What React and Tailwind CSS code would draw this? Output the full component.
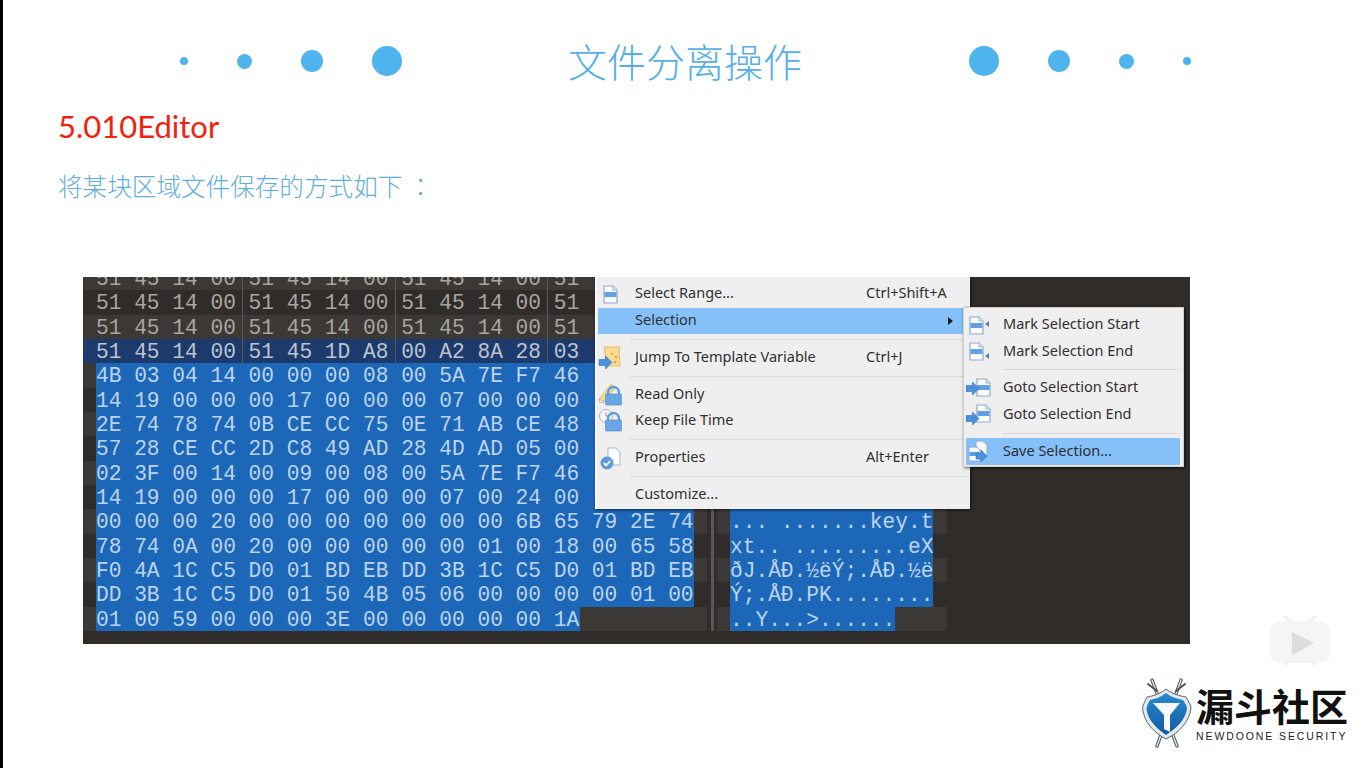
import React from "react";

const rows = [
  { hex: "51 45 14 00 51 45 14 00 51 45 14 00 51" },
  { hex: "51 45 14 00 51 45 14 00 51 45 14 00 51" },
  { hex: "51 45 14 00 51 45 14 00 51 45 14 00 51" },
  { hex: "51 45 14 00 51 45 1D A8 00 A2 8A 28 03", mark: true },
  { hex: "4B 03 04 14 00 00 00 08 00 5A 7E F7 46", sel: true },
  { hex: "14 19 00 00 00 17 00 00 00 07 00 00 00", sel: true },
  { hex: "2E 74 78 74 0B CE CC 75 0E 71 AB CE 48", sel: true },
  { hex: "57 28 CE CC 2D C8 49 AD 28 4D AD 05 00", sel: true },
  { hex: "02 3F 00 14 00 09 00 08 00 5A 7E F7 46", sel: true },
  { hex: "14 19 00 00 00 17 00 00 00 07 00 24 00", sel: true },
  { hex: "00 00 00 20 00 00 00 00 00 00 00 6B 65 79 2E 74", sel: true, asc: "... .......key.t" },
  { hex: "78 74 0A 00 20 00 00 00 00 00 01 00 18 00 65 58", sel: true, asc: "xt.. .........eX" },
  { hex: "F0 4A 1C C5 D0 01 BD EB DD 3B 1C C5 D0 01 BD EB", sel: true, asc: "ðJ.ÅÐ.½ëÝ;.ÅÐ.½ë" },
  { hex: "DD 3B 1C C5 D0 01 50 4B 05 06 00 00 00 00 01 00", sel: true, asc: "Ý;.ÅÐ.PK........" },
  { hex: "01 00 59 00 00 00 3E 00 00 00 00 00 1A", sel: true, short: true, asc: "..Y...>......" },
];

const Page = ({ x = 0, y = 0 }) => (
  <g transform={`translate(${x} ${y})`}>
    <path d="M1 1h9l4 4v13H1z" fill="#fbfcfe" stroke="#8fa9cf" strokeWidth="1.2" />
    <rect x="1.5" y="7" width="12" height="5" fill="#5fa0e6" />
    <path d="M10 1v4h4" fill="#dfe7f3" stroke="#8fa9cf" strokeWidth="0.8" />
  </g>
);

const Arrow = ({ x = 0, y = 0 }) => (
  <path
    transform={`translate(${x} ${y})`}
    d="M13 6.5 6.5 0v3.5H0v6h6.5V13z"
    fill="#4a90dc"
    stroke="#2f74c0"
    strokeWidth="0.6"
  />
);

const Lock = () => (
  <g>
    <path d="M10 13v-2.5a5.5 5.5 0 0 1 11 0V13" fill="none" stroke="#5f9fe0" strokeWidth="2.4" />
    <rect x="7.5" y="12" width="16" height="11" rx="1" fill="#6aa6e6" stroke="#4c87c8" strokeWidth="0.6" />
  </g>
);

const Icon = ({ kind }) => {
  const base = "w-[26px] h-[26px] shrink-0";
  if (kind === "page")
    return (
      <svg viewBox="0 0 26 26" className={base}>
        <Page x={5} y={4} />
      </svg>
    );
  if (kind === "scroll")
    return (
      <svg viewBox="0 0 26 26" className={base}>
        <path d="M6 2h16l-1 4 1 15H8L7 7z" fill="#f7dc95" stroke="#e8bd62" strokeWidth="1" />
        <circle cx="14" cy="9" r="1.3" fill="#dca94c" />
        <circle cx="18" cy="12" r="1.3" fill="#dca94c" />
        <circle cx="17" cy="17" r="1.3" fill="#dca94c" />
        <Arrow x={1} y={11} />
      </svg>
    );
  if (kind === "lockpen")
    return (
      <svg viewBox="0 0 26 26" className={base}>
        <path d="M1 17 13 2l5 3L6 20z" fill="#f6d98f" stroke="#e2bb66" strokeWidth="0.8" />
        <path d="M1 17l1 4 4-1z" fill="#fff" stroke="#999" strokeWidth="0.6" />
        <Lock />
      </svg>
    );
  if (kind === "lockclock")
    return (
      <svg viewBox="0 0 26 26" className={base}>
        <circle cx="8" cy="8" r="6.5" fill="#f6f6f8" stroke="#a9b4c4" strokeWidth="1" />
        <path d="M8 4v4h3" fill="none" stroke="#8d98a8" strokeWidth="0.9" />
        <Lock />
      </svg>
    );
  if (kind === "check")
    return (
      <svg viewBox="0 0 26 26" className={base}>
        <path d="M10 3h8l4 4v13H10z" fill="#fbfcfe" stroke="#aab8cc" strokeWidth="1" />
        <circle cx="9" cy="18" r="6.5" fill="#5c9bdc" />
        <path d="M5.8 18l2.4 2.4 4-4.4" fill="none" stroke="#fff" strokeWidth="1.8" />
      </svg>
    );
  if (kind === "markstart")
    return (
      <svg viewBox="0 0 26 26" className={base}>
        <Page x={3} y={4} />
        <path d="M23 9v6l-4-3z" fill="#5d7fa8" />
      </svg>
    );
  if (kind === "markend")
    return (
      <svg viewBox="0 0 26 26" className={base}>
        <Page x={3} y={3} />
        <path d="M23 14v6l-4-3z" fill="#5d7fa8" />
      </svg>
    );
  if (kind === "gotostart")
    return (
      <svg viewBox="0 0 26 26" className={base}>
        <Page x={10} y={3} />
        <Arrow x={0} y={7} />
      </svg>
    );
  if (kind === "gotoend")
    return (
      <svg viewBox="0 0 26 26" className={base}>
        <Page x={10} y={2} />
        <Arrow x={0} y={10} />
      </svg>
    );
  return (
    <svg viewBox="0 0 26 26" className={base}>
      <path d="M10 2h7l4 4v12H10z" fill="#f4f8fd" stroke="#8fa9cf" strokeWidth="1" />
      <path d="M3 8h8l3 3v11H3z" fill="#fbfcfe" stroke="#8fa9cf" strokeWidth="1" />
      <rect x="3.5" y="13" width="10" height="4" fill="#5fa0e6" />
      <path d="M10 14h5v-3l6 6-6 6v-3h-5z" fill="#4a90dc" stroke="#2f74c0" strokeWidth="0.6" />
    </svg>
  );
};

const MenuSep = () => (
  <div className="h-[10.5px] flex items-center pl-[33px]">
    <div className="h-px w-full bg-[#dcdbdc]" />
  </div>
);

const MenuItem = ({ icon, label, shortcut, arrow, active }) => (
  <div className={`h-[26.5px] ml-[1px] flex items-center ${active ? "bg-[#85c0f8]" : ""}`}>
    <div className="w-[37px] flex items-center">{icon ? <Icon kind={icon} /> : null}</div>
    <div className="w-[231px] whitespace-pre pb-[2px]">{label}</div>
    {shortcut ? <div className="whitespace-pre pb-[2px]">{shortcut}</div> : null}
    {arrow ? (
      <div className="ml-auto mr-[17px] w-0 h-0 border-y-[4px] border-y-transparent border-l-[5px] border-l-[#1a1a1a]" />
    ) : null}
  </div>
);

const SubItem = ({ icon, label, active }) => (
  <div className={`h-[26.7px] ml-[2px] mr-[3px] flex items-center ${active ? "bg-[#85c0f8]" : ""}`}>
    <div className="w-[37px] flex items-center">
      <Icon kind={icon} />
    </div>
    <div className="whitespace-pre pb-[2px]">{label}</div>
  </div>
);

const SubSep = () => (
  <div className="h-[10px] flex items-center pl-[38px] pr-[4px]">
    <div className="h-px w-full bg-[#dcdbdc]" />
  </div>
);

const HexRow = ({ row, index }) => {
  const band = index % 2 === 0 ? "bg-[#3b3835]" : "bg-[#2f2c2a]";
  const hexBg = row.mark ? "bg-[#1c3a6c]" : band;
  const sel = "bg-[#1d67b8] text-[#bcd4ee]";
  const width = row.short ? "w-[484px]" : "w-[598px]";
  return (
    <div className="flex h-[24.33px] leading-[27px]">
      <div className={`w-[624px] pl-[13px] whitespace-pre overflow-hidden ${hexBg}`}>
        <span className={`inline-block h-[24.33px] ${width} ${row.sel ? sel : row.mark ? "text-[#bcc4d0]" : "text-[#aaa69f]"}`}>
          {row.hex}
        </span>
      </div>
      <div className="w-[10px] flex justify-center">
        <div className="w-[3px] bg-[#5a5856]" />
      </div>
      <div className={`w-[230px] pl-[13px] whitespace-pre overflow-hidden ${band}`}>
        {row.asc ? <span className={`inline-block h-[24.33px] ${sel}`}>{row.asc}</span> : null}
      </div>
    </div>
  );
};

const Dot = ({ cls }) => <div className={`rounded-full bg-[#4fb3ee] shrink-0 ${cls}`} />;

const Sword = ({ x1, x2 }) => (
  <g>
    <path d={`M${x1} 2L${x2} 68`} stroke="#4a5058" strokeWidth="3.4" strokeLinecap="round" />
    <path d={`M${x1} 2L${x2} 68`} stroke="#e4e7ea" strokeWidth="1.4" strokeLinecap="round" />
  </g>
);

const Shield = () => (
  <svg viewBox="0 0 50 72" className="w-[50px] h-[72px] shrink-0">
    <defs>
      <linearGradient id="sh" x1="0" y1="0" x2="0" y2="1">
        <stop offset="0" stopColor="#2a8ad0" />
        <stop offset="1" stopColor="#0f5a9e" />
      </linearGradient>
    </defs>
    <Sword x1={10} x2={35} />
    <Sword x1={39} x2={15} />
    <path d="M6 6l9 7M43 6l-9 7" stroke="#4a5058" strokeWidth="2" strokeLinecap="round" />
    <path d="M24 11C30 16 38 18 44 19C47 24 49 28 49 30C47 44 38 54 24 61C11 54 2 44 0.5 30C1 27 3 23 5 19C11 18 18 16 24 11z" fill="#e3e8ec" stroke="#5a6672" strokeWidth="1" />
    <path d="M24 15C29 19 36 21 41 22C43 25 45 28 45 31C43 42 35 50 24 57C14 50 6 42 4.5 31C5 28 6 25 8 22C13 21 19 19 24 15z" fill="url(#sh)" />
    <path d="M11 25H38L28 37V54L22 51V37z" fill="#f6f8fa" />
  </svg>
);

export default function App() {
  return (
    <div className="relative w-[1366px] h-[768px] overflow-hidden bg-white border-l-[3px] border-black">
      <header className="flex items-center h-[42px] mt-[40px] pl-[177px] font-['Noto_Sans_CJK_SC',sans-serif]">
        <div className="flex items-center gap-[49px]">
          <Dot cls="w-[8px] h-[8px]" />
          <Dot cls="w-[15px] h-[15px]" />
          <Dot cls="w-[22px] h-[22px]" />
          <Dot cls="w-[30px] h-[30px]" />
        </div>
        <h1 className="mx-[166px] w-[235px] pb-[2px] text-[39px] leading-[42px] font-light whitespace-nowrap text-[#55b0e6]">
          文件分离操作
        </h1>
        <div className="flex items-center gap-[49px]">
          <Dot cls="w-[30px] h-[30px]" />
          <Dot cls="w-[22px] h-[22px]" />
          <Dot cls="w-[15px] h-[15px]" />
          <Dot cls="w-[8px] h-[8px]" />
        </div>
      </header>

      <div className="pl-[55px]">
        <h2 className="mt-[24px] h-[40px] leading-[40px] text-[31px] text-[#f5200c] font-['Lato',sans-serif]">
          5.010Editor
        </h2>
        <p className="mt-[22px] h-[34px] leading-[34px] text-[24.6px] font-light text-[#62aede] whitespace-nowrap font-['Noto_Sans_CJK_SC',sans-serif]">
          将某块区域文件保存的方式如下<span className="ml-[6px] font-['Noto_Sans_CJK_TC',sans-serif]">：</span>
        </p>

        <div className="relative mt-[75px] ml-[25px] w-[1107px] h-[367px] overflow-hidden bg-[#2f2c2a] font-['Liberation_Mono',monospace] text-[21.2px]">
          <div className="-mt-[11px]">
            {rows.map((row, i) => (
              <HexRow key={i} row={row} index={i} />
            ))}
          </div>
          <div className="absolute left-[159px] top-0 h-[87px] w-px bg-[#5d5a56]" />
          <div className="absolute left-[312px] top-0 h-[87px] w-px bg-[#5d5a56]" />
          <div className="absolute left-[464px] top-0 h-[87px] w-px bg-[#5d5a56]" />

          <div className="absolute left-[512px] top-0 w-[375px] h-[232px] pt-[4px] bg-[#f0eff0] border-l-2 border-[#f7f7f7] shadow-[1px_1px_3px_rgba(0,0,0,0.6)] text-[14.5px] text-[#2f2f2f] font-['Noto_Sans',sans-serif]">
            <MenuItem icon="page" label="Select Range..." shortcut="Ctrl+Shift+A" />
            <MenuItem label="Selection" arrow active />
            <MenuSep />
            <MenuItem icon="scroll" label="Jump To Template Variable" shortcut="Ctrl+J" />
            <MenuSep />
            <MenuItem icon="lockpen" label="Read Only" />
            <MenuItem icon="lockclock" label="Keep File Time" />
            <MenuSep />
            <MenuItem icon="check" label="Properties" shortcut="Alt+Enter" />
            <MenuSep />
            <MenuItem label="Customize..." />
          </div>

          <div className="absolute left-[880px] top-[30px] w-[221px] h-[160px] pt-[3.5px] bg-[#f0eff0] border border-[#cfcfcf] shadow-[1px_1px_3px_rgba(0,0,0,0.6)] text-[14.5px] text-[#2f2f2f] font-['Noto_Sans',sans-serif]">
            <SubItem icon="markstart" label="Mark Selection Start" />
            <SubItem icon="markend" label="Mark Selection End" />
            <SubSep />
            <SubItem icon="gotostart" label="Goto Selection Start" />
            <SubItem icon="gotoend" label="Goto Selection End" />
            <SubSep />
            <SubItem icon="save" label="Save Selection..." active />
          </div>
        </div>
      </div>

      <svg viewBox="0 0 60 52" className="absolute left-[1267px] top-[615px] w-[60px] h-[52px]">
        <path d="M15 2l9 7M45 2 36 9" stroke="#f0f0f0" strokeWidth="3" strokeLinecap="round" />
        <rect x="0" y="6" width="60" height="42" rx="10" fill="#f5f5f5" />
        <path d="M12 47h6v3h-4zM42 47h6l-2 3h-4z" fill="#f0f0f0" />
        <path d="M22 17l22 11-22 12z" fill="#dcdcdc" />
      </svg>

      <div className="flex justify-end items-center mt-[34px] pr-[18px] gap-[4px]">
        <Shield />
        <div className="w-[152px] flex flex-col pb-[2px]">
          <div className="h-[44px] leading-[44px] text-[38px] font-bold text-[#111] whitespace-nowrap font-['Noto_Sans_CJK_SC',sans-serif]">
            漏斗社区
          </div>
          <div className="h-[16px] leading-[14px] pt-[2px] text-[10.5px] tracking-[1.9px] text-[#222] whitespace-nowrap font-['Liberation_Sans',sans-serif]">
            NEWDOONE SECURITY
          </div>
        </div>
      </div>
    </div>
  );
}
